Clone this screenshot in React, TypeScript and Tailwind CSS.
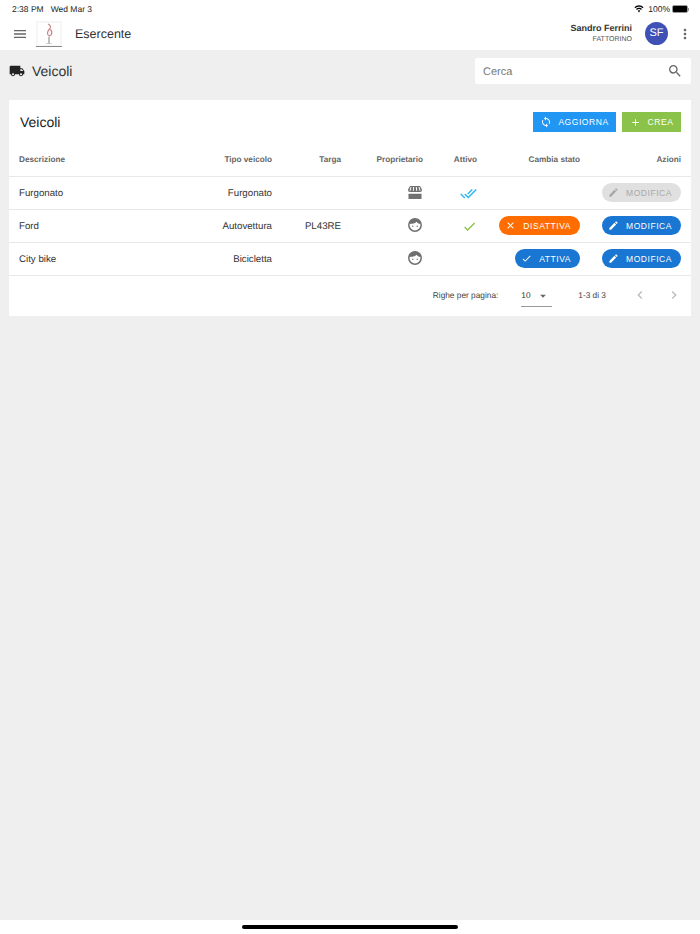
import { MdLocalShipping, MdDoneAll, MdCheck, MdEdit, MdSearch, MdMenu, MdMoreVert, MdClose, MdAdd, MdSync, MdChevronLeft, MdChevronRight, MdArrowDropDown } from 'react-icons/md';

function Logo() {
  return (
    <svg width="26" height="26" viewBox="0 0 26 26" className="shrink-0">
      <rect x="0" y="0" width="26" height="26" fill="#f6f6f6" />
      <rect x="2" y="2" width="22" height="22" fill="#fff" />
      <rect x="0" y="25" width="26" height="1" fill="#8a8a90" />
      <path d="M12 3c2.500 1 3 3 2 4.500-2 2-3 4-2.200 6 1 1.500 2.800 1.500 3.600 0 .8-2 0-4-1-5" fill="none" stroke="#c9868a" strokeWidth="1.200" />
      <path d="M13 15.500V22" stroke="#aaa" strokeWidth="1.500" />
      <path d="M10.500 22.500h5" stroke="#c5c5c5" strokeWidth="1" />
    </svg>
  );
}

function WifiIcon() {
  return (
    <svg width="10" height="8" viewBox="0 0 22 16" fill="#000">
      <path d="M11 3.200c3.100 0 5.900 1.200 8 3.200L21 4.300C18.400 1.700 14.900 0 11 0S3.600 1.700 1 4.300l2 2.100c2.100-2 4.900-3.200 8-3.200z" />
      <path d="M11 8.200c1.700 0 3.300.7 4.500 1.800l2-2.100C15.800 6.200 13.500 5.200 11 5.200s-4.800 1-6.500 2.700l2 2.100c1.200-1.100 2.800-1.800 4.500-1.800z" />
      <path d="M11 11c-1 0-1.900.4-2.600 1L11 15.500l2.600-3.500C12.900 11.400 12 11 11 11z" />
    </svg>
  );
}

function BatteryIcon() {
  return (
    <div className="flex items-center">
      <div className="w-[16px] h-[8px] rounded-[2px] bg-black border border-[#999]" />
      <div className="w-[1px] h-[3px] bg-[#999]" />
    </div>
  );
}

function StoreIcon() {
  return (
    <svg width="14" height="13" viewBox="0 0 14 13" fill="#707070">
      <path d="M2 0h10l2 3.500c0 1.700-.8 2.500-1.800 2.500H1.800C.8 6 0 5.200 0 3.500z" />
      <path d="M3 1 2 4.800M5.700 1l-.4 3.800M8.300 1l.4 3.800M11 1l1 3.800" stroke="#fff" strokeWidth="1" />
      <rect x="0.500" y="7.800" width="13" height="5.200" rx="0.500" />
    </svg>
  );
}

function FaceIcon() {
  return (
    <svg width="14" height="14" viewBox="0 0 14 14">
      <circle cx="7" cy="7" r="6.200" fill="#fff" stroke="#707070" strokeWidth="1.500" />
      <path d="M1.500 6C1.800 3 4 .8 7 .8S12.200 3 12.500 6C10.500 5.800 9.200 5 8.600 3.800 7.400 5.200 4.500 6 1.500 6z" fill="#707070" />
      <circle cx="4.800" cy="8.300" r="0.700" fill="#707070" />
      <circle cx="9.200" cy="8.300" r="0.700" fill="#707070" />
    </svg>
  );
}

function PillButton({ color, icon, label }: { color: string; icon: React.ReactNode; label: string }) {
  return (
    <button className={`h-[19px] -mt-[1px] rounded-full flex items-center pl-[6px] pr-[9px] gap-[7px] text-[8.500px] tracking-[0.065em] ${color}`}>
      {icon}
      <span>{label}</span>
    </button>
  );
}

const gridClass = 'grid grid-cols-[153px_100px_69px_82px_54px_103px_101px] items-center px-[10px] border-b border-[#e8e8e8]';
const rowClass = `${gridClass} h-[33px] text-[9.700px] leading-[16px] text-[#333]`;

export default function App() {
  return (
    <div className="min-h-[934px] flex flex-col bg-[#efefef] font-['Liberation_Sans',sans-serif] [text-rendering:geometricPrecision]">
      {/* Header */}
      <header className="bg-white h-[50px] flex flex-col shrink-0">
        <div className="h-[17px] pt-[1px] flex items-center justify-between pl-[12px] pr-[11px] text-[8.500px] text-[#222]">
          <div className="flex gap-[7px]">
            <span>2:38 PM</span>
            <span>Wed Mar 3</span>
          </div>
          <div className="flex items-center gap-[2px]">
            <WifiIcon />
            <span className="ml-[2px]">100%</span>
            <BatteryIcon />
          </div>
        </div>
        <div className="flex-1 flex items-center pl-[12px] pr-[7px]">
          <MdMenu className="w-[16px] h-[16px] text-[#666]" />
          <div className="ml-[8px]"><Logo /></div>
          <span className="ml-[13px] mt-[1px] text-[12.500px] text-[#333]">Esercente</span>
          <div className="ml-auto flex items-center">
            <div className="flex flex-col items-end">
              <span className="text-[9px] font-bold text-[#333] leading-[12px]">Sandro Ferrini</span>
              <span className="text-[7px] text-[#555] leading-[11px]">FATTORINO</span>
            </div>
            <div className="ml-[13px] w-[23px] h-[23px] rounded-full bg-[#3f51b5] text-white text-[11px] flex items-center justify-center">SF</div>
            <MdMoreVert className="ml-[9px] w-[16px] h-[16px] text-[#666]" />
          </div>
        </div>
      </header>

      <main className="flex-1 px-[9px]">
        {/* Title row */}
        <div className="h-[50px] pb-[8px] flex items-center">
          <MdLocalShipping className="w-[16px] h-[16px] text-[#222]" />
          <h1 className="ml-[7px] text-[14px] text-[#333]">Veicoli</h1>
          <div className="ml-auto w-[216px] h-[26px] bg-white rounded-[2px] flex items-center pl-[8px] pr-[8px] justify-between">
            <span className="text-[11px] leading-[18px] mt-[1px] text-[#777]">Cerca</span>
            <MdSearch className="w-[16px] h-[16px] text-[#666]" />
          </div>
        </div>

        {/* Card */}
        <section className="bg-white">
          <div className="h-[43px] flex items-center pl-[11px] pr-[10px]">
            <h2 className="text-[14px] text-[#222] mt-[2px]">Veicoli</h2>
            <div className="ml-auto flex gap-[6px] mt-[1px]">
              <button className="h-[20px] w-[83px] bg-[#2196f3] text-white text-[8.500px] tracking-[0.065em] flex items-center justify-center gap-[6px]">
                <MdSync className="w-[12px] h-[12px]" />
                <span>AGGIORNA</span>
              </button>
              <button className="h-[20px] w-[59px] bg-[#8bc34a] text-white text-[8.500px] tracking-[0.065em] flex items-center justify-center gap-[7px]">
                <MdAdd className="w-[11px] h-[11px]" />
                <span>CREA</span>
              </button>
            </div>
          </div>

          <div className={`${gridClass} h-[34px] pt-[1px] text-[8.200px] font-bold text-[#666]`}>
            <span>Descrizione</span>
            <span className="text-right">Tipo veicolo</span>
            <span className="text-right">Targa</span>
            <span className="text-right">Proprietario</span>
            <span className="text-right">Attivo</span>
            <span className="text-right">Cambia stato</span>
            <span className="text-right">Azioni</span>
          </div>

          <div className={rowClass}>
            <span className="pt-[2px]">Furgonato</span>
            <span className="pt-[2px] text-right">Furgonato</span>
            <span />
            <span className="flex justify-end pr-[1.500px] -mt-[2px]"><StoreIcon /></span>
            <span className="flex justify-end"><MdDoneAll className="w-[17px] h-[17px] text-[#29b6f6]" /></span>
            <span />
            <span className="flex justify-end">
              <PillButton color="bg-[#e0e0e0] text-[#a8a8a8]" icon={<MdEdit className="w-[11px] h-[11px]" />} label="MODIFICA" />
            </span>
          </div>
          <div className={rowClass}>
            <span className="pt-[2px]">Ford</span>
            <span className="pt-[2px] text-right">Autovettura</span>
            <span className="pt-[2px] text-right">PL43RE</span>
            <span className="flex justify-end pr-[1.500px] -mt-[2px]"><FaceIcon /></span>
            <span className="flex justify-end"><MdCheck className="w-[15px] h-[15px] text-[#8bc34a]" /></span>
            <span className="flex justify-end">
              <PillButton color="bg-[#ff6d00] text-white" icon={<MdClose className="w-[11px] h-[11px]" />} label="DISATTIVA" />
            </span>
            <span className="flex justify-end">
              <PillButton color="bg-[#1976d2] text-white" icon={<MdEdit className="w-[11px] h-[11px]" />} label="MODIFICA" />
            </span>
          </div>
          <div className={rowClass}>
            <span className="pt-[2px]">City bike</span>
            <span className="pt-[2px] text-right">Bicicletta</span>
            <span />
            <span className="flex justify-end pr-[1.500px] -mt-[2px]"><FaceIcon /></span>
            <span />
            <span className="flex justify-end">
              <PillButton color="bg-[#1976d2] text-white" icon={<MdCheck className="w-[11px] h-[11px]" />} label="ATTIVA" />
            </span>
            <span className="flex justify-end">
              <PillButton color="bg-[#1976d2] text-white" icon={<MdEdit className="w-[11px] h-[11px]" />} label="MODIFICA" />
            </span>
          </div>

          {/* Pagination */}
          <div className="h-[40px] flex items-center justify-end pr-[9px] text-[8.300px] text-[#444]">
            <span className="-mt-[2px]">Righe per pagina:</span>
            <div className="ml-[23px] w-[31px] h-[22px] border-b border-[#999] flex items-center justify-between text-[#333]">
              <span>10</span>
              <MdArrowDropDown className="w-[14px] h-[14px] mr-[2px] text-[#666]" />
            </div>
            <span className="ml-[26px] -mt-[2px]">1-3 di 3</span>
            <MdChevronLeft className="ml-[26px] -mt-[2px] w-[16px] h-[16px] text-[#bbb]" />
            <MdChevronRight className="ml-[18px] -mt-[2px] w-[16px] h-[16px] text-[#bbb]" />
          </div>
        </section>
      </main>

      {/* Home indicator */}
      <footer className="h-[14px] bg-white flex items-center justify-center shrink-0">
        <div className="w-[216px] h-[4px] rounded-full bg-black" />
      </footer>
    </div>
  );
}
